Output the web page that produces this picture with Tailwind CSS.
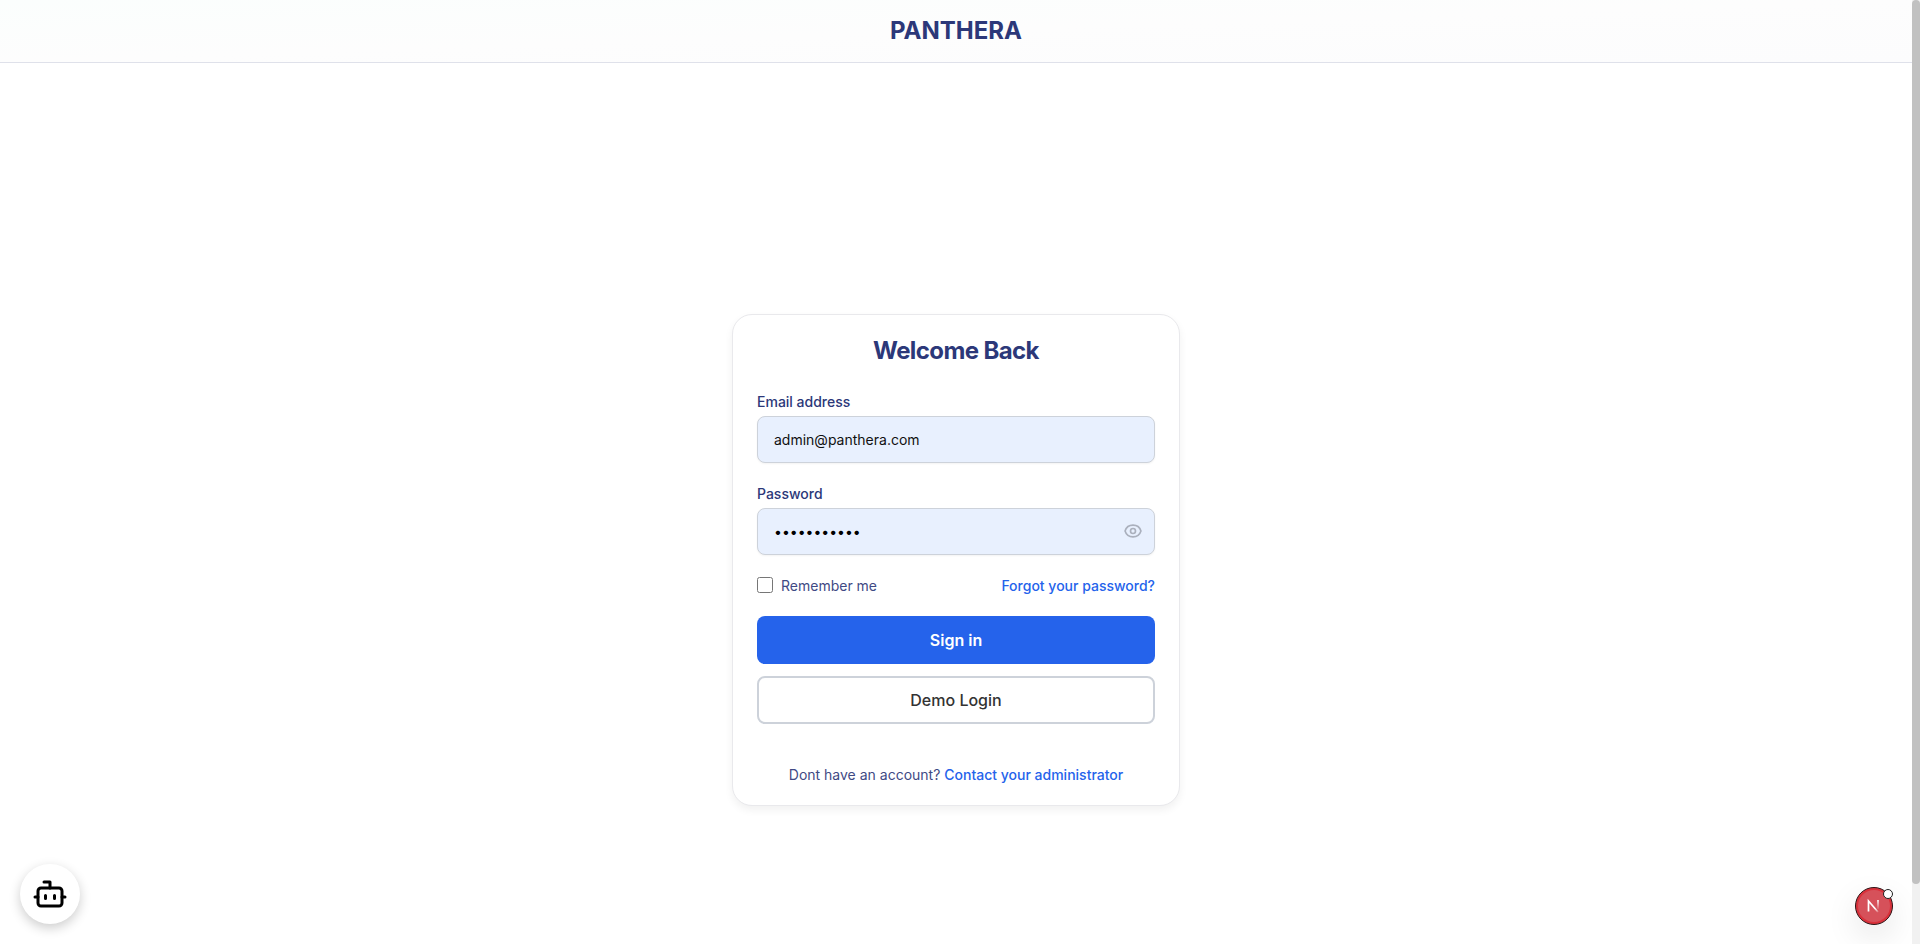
<!DOCTYPE html>
<html lang="en">
<head>
<meta charset="utf-8">
<meta name="viewport" content="width=device-width, initial-scale=1">
<title>Panthera</title>
<script src="https://cdn.jsdelivr.net/npm/@tailwindcss/browser@4"></script>
</head>
<body class="h-screen overflow-hidden bg-white pr-2 font-['Inter',sans-serif] text-[#2c3879]">
<div class="flex h-full flex-col">
  <header class="flex justify-center border-b border-[#dfe1ea] bg-linear-to-br from-[#fbfefd] via-[#fdfdfd] to-[#fcfcfd] pt-[15px] pb-[15px]">
    <h1 class="text-2xl font-bold">PANTHERA</h1>
  </header>
  <main class="flex grow flex-col items-center justify-center pt-[112px]">
    <section class="w-full max-w-md rounded-[20px] border border-[#e9e9ec] bg-white px-6 pt-5 pb-5 shadow-[0_4px_8px_rgba(0,0,0,0.06)]">
      <h2 class="text-center text-2xl font-bold tracking-tight">Welcome Back</h2>
      <form class="mt-[25px] flex flex-col">
        <label for="email" class="text-sm font-medium">Email address</label>
        <input id="email" type="email" value="admin@panthera.com" class="mt-1 h-[47px] w-full rounded-lg border border-[#cdd2da] bg-[#e8f0fe] px-4 text-sm text-[#111111] shadow-xs">
        <label for="password" class="mt-[21px] text-sm font-medium">Password</label>
        <div class="relative mt-1">
          <input id="password" type="password" value="panthera123" class="block h-[47px] w-full rounded-lg border border-[#cdd2da] bg-[#e8f0fe] px-4 text-sm text-black shadow-xs">
          <button type="button" aria-label="Show password" class="absolute inset-y-0 right-3 flex items-center text-[#aab0bd]">
            <svg class="size-5" viewBox="0 0 24 24" fill="none" stroke="currentColor" stroke-width="2" stroke-linecap="round" stroke-linejoin="round"><path d="M15 12a3 3 0 11-6 0 3 3 0 016 0z"/><path d="M2.458 12C3.732 7.943 7.523 5 12 5c4.478 0 8.268 2.943 9.542 7-1.274 4.057-5.064 7-9.542 7-4.477 0-8.268-2.943-9.542-7z"/></svg>
          </button>
        </div>
        <div class="mt-[21px] flex items-center justify-between text-sm">
          <div class="flex items-start gap-2">
            <input id="remember" type="checkbox" class="mt-px size-4">
            <label for="remember" class="text-[#3f4a84]">Remember me</label>
          </div>
          <a href="#" class="font-medium text-[#2563eb]">Forgot your password?</a>
        </div>
        <button type="submit" class="mt-5 h-12 rounded-lg bg-[#2563eb] font-semibold text-white">Sign in</button>
        <button type="button" class="mt-3 h-12 rounded-lg border-2 border-[#cdd2da] bg-white font-medium text-[#333333]">Demo Login</button>
      </form>
      <p class="mt-[41px] text-center text-sm text-[#3f4a84]">Dont have an account? <a href="#" class="font-medium text-[#2563eb]">Contact your administrator</a></p>
    </section>
  </main>
</div>

<button type="button" aria-label="Open assistant" class="fixed bottom-5 left-5 flex size-[60px] items-center justify-center rounded-full bg-white text-black shadow-[0_4px_12px_rgba(0,0,0,0.2)]">
  <svg class="size-9" viewBox="0 0 24 24" fill="none" stroke="currentColor" stroke-width="2" stroke-linecap="round" stroke-linejoin="round"><path d="M12 8V4H8"/><rect width="16" height="12" x="4" y="8" rx="2"/><path d="M2 14h2M20 14h2M15 13v2M9 13v2"/></svg>
</button>

<button type="button" aria-label="Open Next.js dev tools" class="fixed right-[27px] bottom-[19px] flex size-[38px] items-center justify-center rounded-full border border-[#2b1113] bg-[#d6515a] shadow-[inset_0_0_0_2px_#d9303a,0_12px_32px_rgba(0,0,0,0.1)]">
  <svg class="size-4" viewBox="0 0 16 16" fill="none"><defs><linearGradient id="diagonal" x1="8" y1="8" x2="13" y2="15" gradientUnits="userSpaceOnUse"><stop offset=".3" stop-color="#fff"/><stop offset="1" stop-color="#fff" stop-opacity="0"/></linearGradient><linearGradient id="stem" x1="0" y1="2" x2="0" y2="12" gradientUnits="userSpaceOnUse"><stop stop-color="#fff"/><stop offset="1" stop-color="#fff" stop-opacity="0"/></linearGradient></defs><path d="M2.500 13.500V3L12 14" stroke="url(#diagonal)" stroke-width="1.700"/><path d="M12 2V11" stroke="url(#stem)" stroke-width="1.600"/></svg>
  <span class="absolute top-px -right-px size-[10px] rounded-full border border-[#1f1f1f] bg-white"></span>
</button>

<div aria-hidden="true" class="fixed inset-y-0 right-0 w-2 bg-[#f1f1f1]"><div class="h-[884px] rounded bg-[#c1c1c1]"></div></div>
</body>
</html>
